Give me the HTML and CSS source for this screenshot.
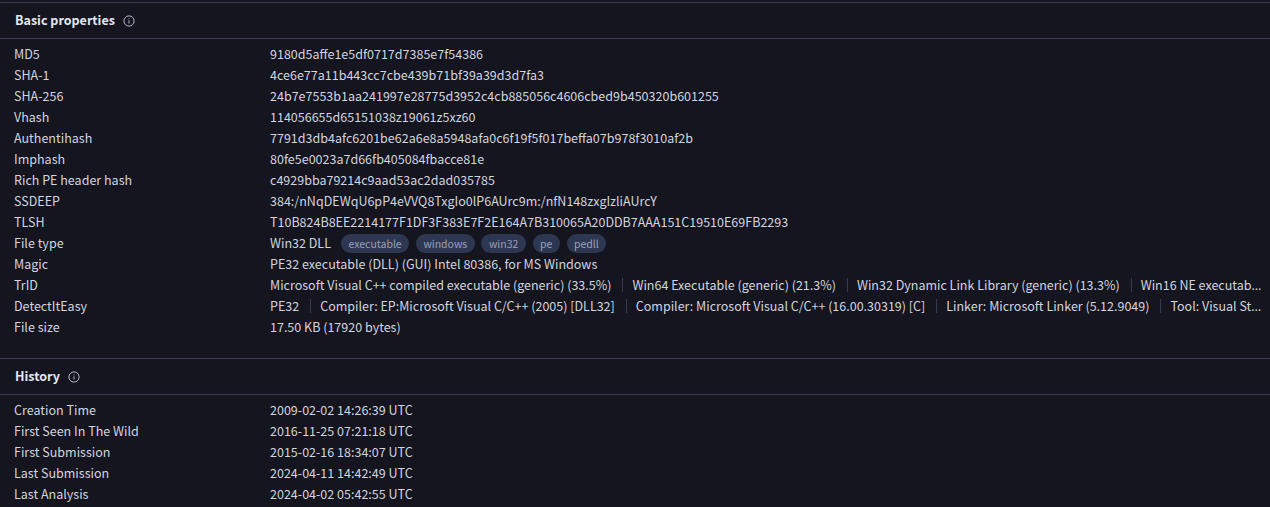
FILE: index.html
```html
<!DOCTYPE html>
<html lang="en">
<head>
<meta charset="utf-8">
<title>Details</title>
<link rel="stylesheet" href="styles.css">
</head>
<body>
<section class="section">
  <h2 class="head"><span class="title">Basic properties</span><svg class="info" viewBox="0 0 12 12"><circle cx="6" cy="6" r="5.1"/><path d="M6 5.4v3.1M6 3.4v.9"/></svg></h2>
  <div class="rows">
    <div class="row"><div class="key">MD5</div><div class="val">9180d5affe1e5df0717d7385e7f54386</div></div>
    <div class="row"><div class="key">SHA-1</div><div class="val">4ce6e77a11b443cc7cbe439b71bf39a39d3d7fa3</div></div>
    <div class="row"><div class="key">SHA-256</div><div class="val">24b7e7553b1aa241997e28775d3952c4cb885056c4606cbed9b450320b601255</div></div>
    <div class="row"><div class="key">Vhash</div><div class="val">114056655d65151038z19061z5xz60</div></div>
    <div class="row"><div class="key">Authentihash</div><div class="val">7791d3db4afc6201be62a6e8a5948afa0c6f19f5f017beffa07b978f3010af2b</div></div>
    <div class="row"><div class="key">Imphash</div><div class="val">80fe5e0023a7d66fb405084fbacce81e</div></div>
    <div class="row"><div class="key">Rich PE header hash</div><div class="val">c4929bba79214c9aad53ac2dad035785</div></div>
    <div class="row"><div class="key">SSDEEP</div><div class="val">384:/nNqDEWqU6pP4eVVQ8TxgIo0lP6AUrc9m:/nfN148zxgIzliAUrcY</div></div>
    <div class="row"><div class="key">TLSH</div><div class="val">T10B824B8EE2214177F1DF3F383E7F2E164A7B310065A20DDB7AAA151C19510E69FB2293</div></div>
    <div class="row"><div class="key">File type</div><div class="val"><span>Win32 DLL</span><span class="tags"><span class="tag">executable</span><span class="tag">windows</span><span class="tag">win32</span><span class="tag">pe</span><span class="tag">pedll</span></span></div></div>
    <div class="row"><div class="key">Magic</div><div class="val">PE32 executable (DLL) (GUI) Intel 80386, for MS Windows</div></div>
    <div class="row"><div class="key">TrID</div><div class="val"><span class="item">Microsoft Visual C++ compiled executable (generic) (33.5%)</span><span class="item">Win64 Executable (generic) (21.3%)</span><span class="item">Win32 Dynamic Link Library (generic) (13.3%)</span><span class="item">Win16 NE executab<span class="ell">…</span></span></div></div>
    <div class="row"><div class="key">DetectItEasy</div><div class="val"><span class="item">PE32</span><span class="item">Compiler: EP:Microsoft Visual C/C++ (2005) [DLL32]</span><span class="item">Compiler: Microsoft Visual C/C++ (16.00.30319) [C]</span><span class="item">Linker: Microsoft Linker (5.12.9049)</span><span class="item">Tool: Visual St<span class="ell">…</span></span></div></div>
    <div class="row"><div class="key">File size</div><div class="val">17.50 KB (17920 bytes)</div></div>
  </div>
</section>
<section class="section">
  <h2 class="head"><span class="title">History</span><svg class="info" viewBox="0 0 12 12"><circle cx="6" cy="6" r="5.1"/><path d="M6 5.4v3.1M6 3.4v.9"/></svg></h2>
  <div class="rows">
    <div class="row"><div class="key">Creation Time</div><div class="val">2009-02-02 14:26:39 UTC</div></div>
    <div class="row"><div class="key">First Seen In The Wild</div><div class="val">2016-11-25 07:21:18 UTC</div></div>
    <div class="row"><div class="key">First Submission</div><div class="val">2015-02-16 18:34:07 UTC</div></div>
    <div class="row"><div class="key">Last Submission</div><div class="val">2024-04-11 14:42:49 UTC</div></div>
    <div class="row"><div class="key">Last Analysis</div><div class="val">2024-04-02 05:42:55 UTC</div></div>
  </div>
</section>
</body>
</html>
```
FILE: styles.css
```css
html, body {
  margin: 0;
  height: 507px;
  overflow: hidden;
  background: #14151f;
}
body {
  padding-top: 2px;
  box-sizing: border-box;
  font-family: "Noto Sans CJK SC", "Noto Sans CJK JP", sans-serif;
  font-size: 12.52px;
  line-height: 21px;
  color: #d2d4df;
}
.section {
  border-top: 1px solid #363c54;
  padding-bottom: 21px;
}
.head {
  display: flex;
  align-items: center;
  gap: 8px;
  height: 35px;
  margin: 0;
  padding: 0 15px;
  font-size: 12.52px;
  font-weight: 700;
  color: #e4e6f0;
  border-bottom: 1px solid #363c54;
}
.title {
  margin-bottom: 2px;
}
.info {
  width: 12px;
  height: 12px;
  fill: none;
  stroke: #b4b7c6;
  stroke-width: 1;
}
.rows {
  padding: 4px 0 0 14px;
}
.row {
  display: flex;
  height: 21px;
}
.key {
  flex: 0 0 256px;
  white-space: nowrap;
}
.val {
  flex: 1;
  min-width: 0;
  white-space: nowrap;
}
.item {
  display: inline-block;
  font-size: 12.5px;
}
.item + .item {
  margin-left: 11px;
  padding-left: 10px;
  background: linear-gradient(#343a50, #343a50) left center / 1px 14px no-repeat;
}
.ell {
  font-family: "Noto Sans", sans-serif;
}
.tags {
  margin-left: 10px;
}
.tag {
  display: inline-block;
  height: 19px;
  line-height: 19px;
  margin-right: 6.7px;
  padding: 0 7.5px;
  border-radius: 10px;
  background: #2e3751;
  color: #98a0bb;
  font-size: 10.5px;
  vertical-align: 0;
}
```
